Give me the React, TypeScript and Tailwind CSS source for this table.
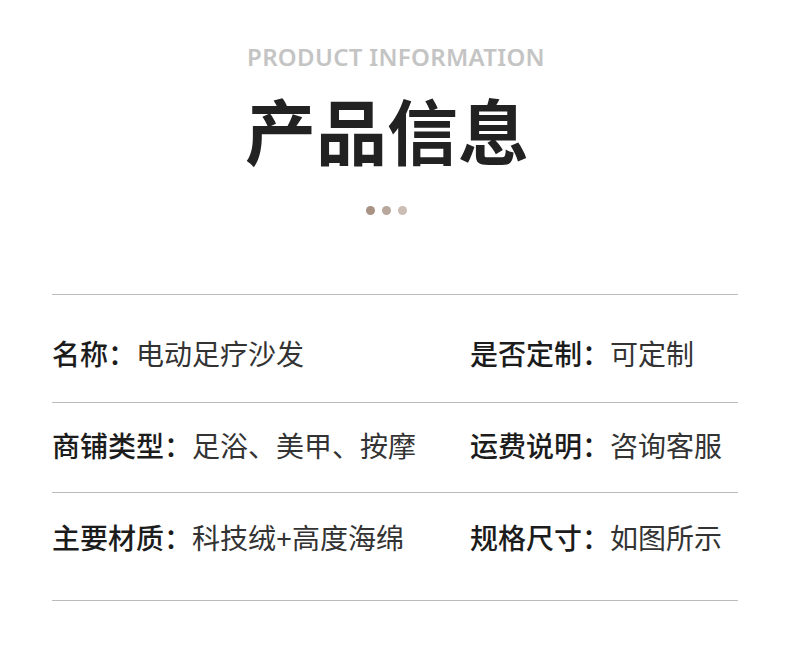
import React from "react";

const rows = [
  { h: "h-[108px] pt-[10px]", left: ["名称：", "电动足疗沙发"], right: ["是否定制：", "可定制"] },
  { h: "h-[90px] pb-[3px]", left: ["商铺类型：", "足浴、美甲、按摩"], right: ["运费说明：", "咨询客服"] },
  { h: "h-[108px] pb-[17px]", left: ["主要材质：", "科技绒+高度海绵"], right: ["规格尺寸：", "如图所示"] },
];

function Cell({ pair }: { pair: string[] }) {
  return (
    <div className="flex items-center text-[28px] leading-none whitespace-nowrap">
      <span className="font-medium text-[#1c1c1c]">{pair[0]}</span>
      <span className="text-[#333333]">{pair[1]}</span>
    </div>
  );
}

export default function App() {
  return (
    <div
      className="w-[790px] h-[659px] bg-white overflow-hidden"
      style={{ fontFamily: '"Noto Sans", "Noto Sans CJK SC", sans-serif' }}
    >
      {/* --- HEADER --- */}
      <div className="flex flex-col items-center pt-[42px]">
        <p className="ml-[2px] text-[24px] leading-[30px] font-semibold text-[#c4c4c4] tracking-[0.3px]">
          PRODUCT INFORMATION
        </p>
        <h1 className="mt-[20px] mr-[16px] text-[71px] leading-[80px] font-bold text-[#222222]">产品信息</h1>
        <div className="mt-[34px] mr-[18px] flex gap-[7px]">
          <span className="w-[9px] h-[9px] rounded-full bg-[#a89283]" />
          <span className="w-[9px] h-[9px] rounded-full bg-[#b9a79b]" />
          <span className="w-[9px] h-[9px] rounded-full bg-[#cbbdb4]" />
        </div>
      </div>

      {/* --- TABLE --- */}
      <div className="mx-[52px] mt-[79px] border-t border-[#bcbcbc]">
        {rows.map((r, i) => (
          <div
            key={i}
            className={`grid grid-cols-[418px_1fr] items-center border-b border-[#bcbcbc] ${r.h}`}
          >
            <Cell pair={r.left} />
            <Cell pair={r.right} />
          </div>
        ))}
      </div>
    </div>
  );
}
